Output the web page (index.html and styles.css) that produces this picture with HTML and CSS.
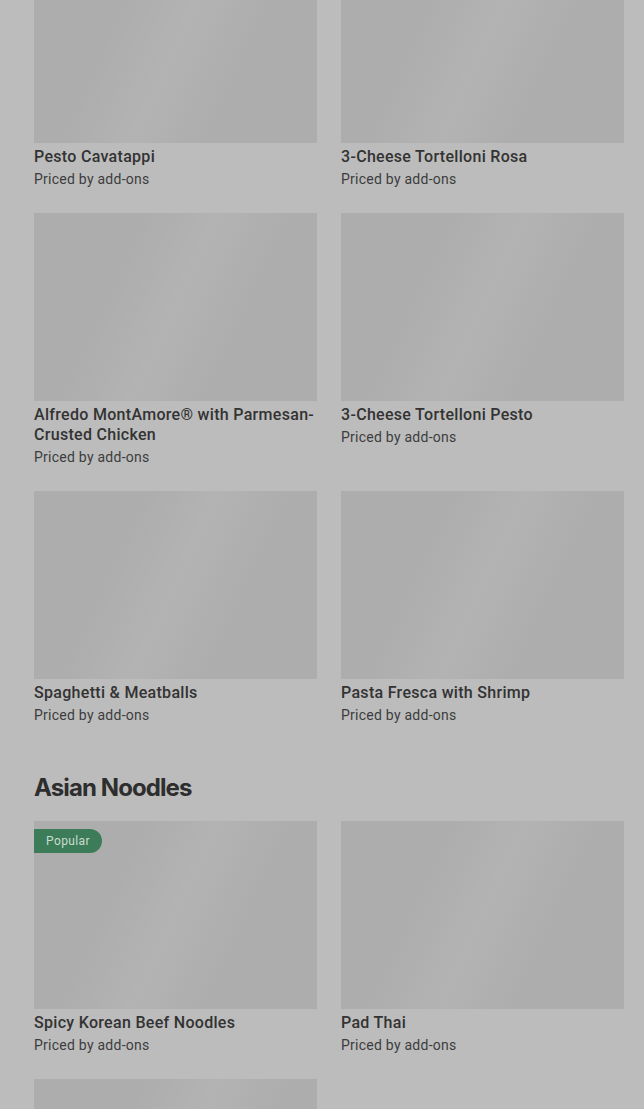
FILE: index.html
```html
<!DOCTYPE html>
<html lang="en">
<head>
    <meta charset="UTF-8">
    <meta name="viewport" content="width=device-width, initial-scale=1.0">
    <title>Menu</title>
    <link rel="stylesheet" href="styles.css">
</head>
<body>
    <div class="menu">
        <section class="section">
            <div class="item-grid">
                <div class="item">
                    <div class="item-image"></div>
                    <div class="item-title">Pesto Cavatappi</div>
                    <div class="item-price">Priced by add-ons</div>
                </div>
                <div class="item">
                    <div class="item-image"></div>
                    <div class="item-title">3-Cheese Tortelloni Rosa</div>
                    <div class="item-price">Priced by add-ons</div>
                </div>
                <div class="item">
                    <div class="item-image"></div>
                    <div class="item-title">Alfredo MontAmore® with Parmesan-Crusted Chicken</div>
                    <div class="item-price">Priced by add-ons</div>
                </div>
                <div class="item">
                    <div class="item-image"></div>
                    <div class="item-title">3-Cheese Tortelloni Pesto</div>
                    <div class="item-price">Priced by add-ons</div>
                </div>
                <div class="item">
                    <div class="item-image"></div>
                    <div class="item-title">Spaghetti &amp; Meatballs</div>
                    <div class="item-price">Priced by add-ons</div>
                </div>
                <div class="item">
                    <div class="item-image"></div>
                    <div class="item-title">Pasta Fresca with Shrimp</div>
                    <div class="item-price">Priced by add-ons</div>
                </div>
            </div>
        </section>

        <section class="section">
            <h2 class="section-title">Asian Noodles</h2>
            <div class="item-grid">
                <div class="item">
                    <div class="item-image">
                        <span class="badge">Popular</span>
                    </div>
                    <div class="item-title">Spicy Korean Beef Noodles</div>
                    <div class="item-price">Priced by add-ons</div>
                </div>
                <div class="item">
                    <div class="item-image"></div>
                    <div class="item-title">Pad Thai</div>
                    <div class="item-price">Priced by add-ons</div>
                </div>
                <div class="item">
                    <div class="item-image"></div>
                </div>
            </div>
        </section>
    </div>
</body>
</html>
```

FILE: styles.css
```css
* {
    margin: 0;
    padding: 0;
    box-sizing: border-box;
}

body {
    background-color: #bcbcbc;
    font-family: Roboto, 'Noto Sans', sans-serif;
    color: #303030;
    overflow: hidden;
}

.menu {
    margin-top: -45px;
    padding: 0 20px 0 34px;
}

.section-title {
    margin: 48px 0 17px;
    font-family: Inter, sans-serif;
    font-size: 24px;
    font-weight: 700;
    line-height: 32px;
    letter-spacing: -0.9px;
    color: #2e2e2e;
}

.item-grid {
    display: grid;
    grid-template-columns: repeat(2, 1fr);
    column-gap: 24px;
    row-gap: 25px;
}

.item-image {
    position: relative;
    height: 188px;
    margin-bottom: 4px;
    background: linear-gradient(115deg, #adadad 0%, #adadad 30%, #b3b3b3 50%, #adadad 70%, #adadad 100%);
}

.item-title {
    font-size: 16px;
    font-weight: 500;
    line-height: 20px;
    letter-spacing: 0.3px;
    color: #333333;
}

.item-price {
    margin-top: 3px;
    font-size: 14px;
    line-height: 18px;
    letter-spacing: 0.25px;
    color: #3c3c3c;
}

.badge {
    position: absolute;
    top: 8px;
    left: 0;
    padding: 0 12px;
    height: 24px;
    line-height: 24px;
    font-size: 12px;
    letter-spacing: 0.4px;
    color: #c9dccf;
    background-color: #3c7c58;
    border-radius: 0 12px 12px 0;
}
```
